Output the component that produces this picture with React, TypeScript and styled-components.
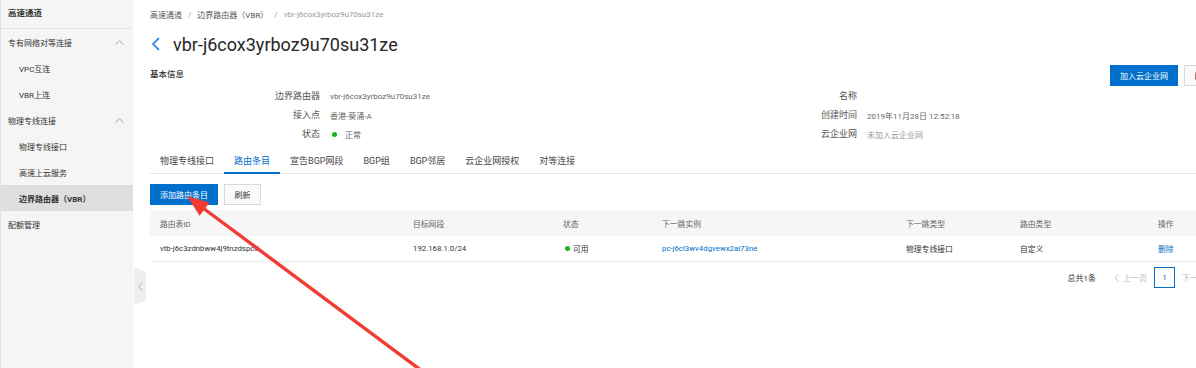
import styled, { createGlobalStyle, css } from 'styled-components';

const GlobalStyle = createGlobalStyle`
  html, body {
    margin: 0;
    padding: 0;
    overflow: hidden;
    background: #fff;
  }
  body {
    font-family: Roboto, "Noto Sans CJK SC", sans-serif;
    color: #333;
  }
`;

const sideMenu = [
  { label: '专有网络对等连接', group: true },
  { label: 'VPC互连' },
  { label: 'VBR上连' },
  { label: '物理专线连接', group: true },
  { label: '物理专线接口' },
  { label: '高速上云服务' },
  { label: '边界路由器（VBR）', active: true },
  { label: '配额管理', top: true },
];

const tabs = ['物理专线接口', '路由条目', '宣告BGP网段', 'BGP组', 'BGP邻居', '云企业网授权', '对等连接'];

const columns = ['路由表ID', '目标网段', '状态', '下一跳实例', '下一跳类型', '路由类型', '操作'];

function ChevronUp() {
  return (
    <svg width='9' height='5' viewBox='0 0 9 5'>
      <polyline points='0.5,4.5 4.5,0.8 8.5,4.5' fill='none' stroke='#999' strokeWidth='0.9' />
    </svg>
  );
}

export default function App() {
  return (
    <Page>
      <GlobalStyle />
      <Sidebar>
        <SideTitle>高速通道</SideTitle>
        {sideMenu.map(item => (
          <SideItem key={item.label} $sub={!item.group && !item.top} $active={item.active}>
            <span>{item.label}</span>
            {item.group && <ChevronUp />}
          </SideItem>
        ))}
      </Sidebar>
      <Main>
        <CollapseTab>
          <svg width='5' height='9' viewBox='0 0 5 9'>
            <polyline points='4.5,0.5 0.8,4.5 4.5,8.5' fill='none' stroke='#aaa' strokeWidth='0.9' />
          </svg>
        </CollapseTab>
        <Breadcrumb>
          <span>高速通道</span>
          <Sep>/</Sep>
          <span>边界路由器（VBR）</span>
          <Sep>/</Sep>
          <Current>vbr-j6cox3yrboz9u70su31ze</Current>
        </Breadcrumb>
        <TitleRow>
          <svg width='10' height='14' viewBox='0 0 10 14'>
            <polyline points='8,1 2,7 8,13' fill='none' stroke='#3a8ee6' strokeWidth='1.8' />
          </svg>
          <Title>vbr-j6cox3yrboz9u70su31ze</Title>
        </TitleRow>
        <SectionHead>
          <SectionTitle>基本信息</SectionTitle>
          <Actions>
            <Button $primary $width={68}>加入云企业网</Button>
            <Button $width={37}>刷新</Button>
          </Actions>
        </SectionHead>
        <InfoGrid>
          <Label>边界路由器</Label>
          <Value>vbr-j6cox3yrboz9u70su31ze</Value>
          <Label>名称</Label>
          <Value />
          <Label>接入点</Label>
          <Value>香港-葵涌-A</Value>
          <Label>创建时间</Label>
          <Value>2019年11月28日 12:52:18</Value>
          <Label>状态</Label>
          <Value>
            <Dot />
            <span>正常</span>
          </Value>
          <Label>云企业网</Label>
          <Value $muted>未加入云企业网</Value>
        </InfoGrid>
        <TabBar>
          {tabs.map(t => (
            <Tab key={t} $active={t === '路由条目'}>
              {t}
            </Tab>
          ))}
        </TabBar>
        <Toolbar>
          <Button $primary $width={68}>添加路由条目</Button>
          <Button $width={37}>刷新</Button>
        </Toolbar>
        <Table>
          <HeadRow>
            {columns.map(c => (
              <Cell key={c}>{c}</Cell>
            ))}
          </HeadRow>
          <BodyRow>
            <Cell>vtb-j6c3zdnbww4j9tnzdspcd</Cell>
            <Cell>192.168.1.0/24</Cell>
            <Cell>
              <Dot />
              可用
            </Cell>
            <Cell>
              <Link>pc-j6cl3wv4dgvewx2ai73ne</Link>
            </Cell>
            <Cell>物理专线接口</Cell>
            <Cell>自定义</Cell>
            <Cell>
              <Link>删除</Link>
            </Cell>
          </BodyRow>
        </Table>
        <Pager>
          <Total>总共1条</Total>
          <PageLink>
            <svg width='5' height='8' viewBox='0 0 5 8'>
              <polyline points='4.5,0.5 1,4 4.5,7.5' fill='none' stroke='#bbb' strokeWidth='0.9' />
            </svg>
            上一页
          </PageLink>
          <PageNum>1</PageNum>
          <PageLink>
            下一页
            <svg width='5' height='8' viewBox='0 0 5 8'>
              <polyline points='0.5,0.5 4,4 0.5,7.5' fill='none' stroke='#bbb' strokeWidth='0.9' />
            </svg>
          </PageLink>
        </Pager>
      </Main>
      <Annotation width='1196' height='368' viewBox='0 0 1196 368'>
        <line x1='203' y1='208' x2='426' y2='374' stroke='#f33a35' strokeWidth='3.4' />
        <polygon points='187,196 209.6,202.6 199.6,215.8' fill='#f33a35' />
      </Annotation>
    </Page>
  );
}

const Page = styled.div`
  position: relative;
  display: flex;
  width: 100vw;
  height: 100vh;
  overflow: hidden;
`;

const Sidebar = styled.aside`
  flex: 0 0 133px;
  background: #f5f5f5;
  border-left: 1px solid #e0e0e0;
  box-sizing: border-box;
`;

const SideTitle = styled.div`
  height: 28px;
  line-height: 27px;
  padding-left: 7px;
  font-size: 8.5px;
  font-weight: 700;
  color: #333;
  border-bottom: 1px solid #e4e4e4;
`;

const SideItem = styled.div<{ $sub?: boolean; $active?: boolean }>`
  display: flex;
  align-items: center;
  justify-content: space-between;
  height: 26px;
  padding: 0 9px 0 ${p => (p.$sub ? 18 : 7)}px;
  font-size: 8px;
  color: #333;
  ${p =>
    p.$active &&
    css`
      background: #dedede;
      font-weight: 700;
    `}
`;

const Main = styled.main`
  position: relative;
  flex: 0 0 auto;
  width: 1078px;
  padding: 8px 0 0 17px;
  font-size: 8px;
`;

const CollapseTab = styled.div`
  position: absolute;
  left: 1px;
  top: 267px;
  width: 12px;
  height: 38px;
  display: flex;
  align-items: center;
  justify-content: center;
  background: #eeeeee;
  clip-path: polygon(0 0, 100% 12%, 100% 88%, 0 100%);
`;

const Breadcrumb = styled.div`
  display: flex;
  align-items: center;
  height: 12px;
  color: #555;
  font-size: 8px;
`;

const Sep = styled.span`
  margin: 0 6px;
  color: #999;
`;

const Current = styled.span`
  color: #999;
`;

const TitleRow = styled.div`
  display: flex;
  align-items: center;
  gap: 12px;
  height: 28px;
  margin-top: 10px;
  padding-left: 1px;
`;

const Title = styled.h1`
  margin: 0;
  font-size: 18px;
  font-weight: 400;
  color: #262626;
`;

const SectionHead = styled.div`
  display: flex;
  justify-content: space-between;
  align-items: flex-start;
  margin-top: 4px;
  height: 25px;
`;

const SectionTitle = styled.div`
  margin-top: 5px;
  font-size: 8.5px;
  font-weight: 500;
  color: #333;
`;

const Actions = styled.div`
  display: flex;
  gap: 6px;
  margin-top: 3px;
  padding-right: 7px;
`;

const Button = styled.button<{ $primary?: boolean; $width?: number }>`
  width: ${p => (p.$width ? `${p.$width}px` : 'auto')};
  height: 21px;
  padding: 0;
  font-family: inherit;
  font-size: 8px;
  white-space: nowrap;
  border: 1px solid ${p => (p.$primary ? '#0070cc' : '#d9d9d9')};
  background: ${p => (p.$primary ? '#0070cc' : '#fafafa')};
  color: ${p => (p.$primary ? '#fff' : '#333')};
  border-radius: 0;
`;

const InfoGrid = styled.div`
  display: grid;
  grid-template-columns: 170px 370px 167px 1fr;
  grid-auto-rows: 19px;
`;

const Label = styled.div`
  text-align: right;
  line-height: 19px;
  color: #555;
  font-size: 9px;
`;

const Value = styled.div<{ $muted?: boolean }>`
  display: flex;
  align-items: center;
  gap: 5px;
  padding-left: 10px;
  color: ${p => (p.$muted ? '#999' : '#666')};
  font-size: 8px;
`;

const Dot = styled.span`
  display: inline-block;
  width: 5px;
  height: 5px;
  border-radius: 50%;
  background: #1ab51a;
  margin: 0 3px 0 2px;
`;

const TabBar = styled.div`
  display: flex;
  margin-top: 8px;
  border-bottom: 1px solid #e5e5e5;
`;

const Tab = styled.div<{ $active?: boolean }>`
  height: 20px;
  line-height: 18px;
  padding: 0 10px;
  font-size: 9px;
  color: ${p => (p.$active ? '#0070cc' : '#444')};
  border-bottom: 2px solid ${p => (p.$active ? '#0070cc' : 'transparent')};
  margin-bottom: -1px;
`;

const Toolbar = styled.div`
  display: flex;
  gap: 6px;
  margin-top: 10px;
`;

const Table = styled.div`
  margin-top: 5px;
`;

const rowGrid = css`
  display: grid;
  grid-template-columns: 253px 150px 99px 244px 114px 138px 1fr;
  align-items: center;
`;

const HeadRow = styled.div`
  ${rowGrid};
  height: 26px;
  background: #f6f6f6;
  color: #666;
`;

const BodyRow = styled.div`
  ${rowGrid};
  height: 25px;
  border-bottom: 1px solid #ebebeb;
  color: #333;
`;

const Cell = styled.div`
  display: flex;
  align-items: center;
  padding-left: 10px;
  font-size: 7.8px;
  white-space: nowrap;
`;

const Link = styled.span`
  color: #0070cc;
`;

const Pager = styled.div`
  display: flex;
  align-items: center;
  justify-content: flex-end;
  margin-top: 5px;
  height: 21px;
  padding-right: 13px;
`;

const Total = styled.span`
  margin-right: 18px;
  color: #333;
`;

const PageLink = styled.span`
  display: flex;
  align-items: center;
  gap: 4px;
  color: #bbb;
`;

const PageNum = styled.span`
  width: 19px;
  height: 19px;
  margin: 0 7px;
  border: 1px solid #0070cc;
  color: #0070cc;
  display: flex;
  align-items: center;
  justify-content: center;
`;

const Annotation = styled.svg`
  position: absolute;
  left: 0;
  top: 0;
  pointer-events: none;
`;
